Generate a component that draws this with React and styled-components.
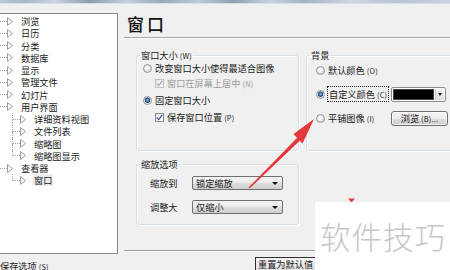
import React from 'react'
import styled, { createGlobalStyle } from 'styled-components'

const CJK = `"Noto Sans CJK SC", "Noto Sans", sans-serif`

const GlobalStyle = createGlobalStyle`
  html, body {
    margin: 0;
    padding: 0;
    background: #f0f0f0;
  }
  body {
    font-family: ${CJK};
  }
`

const Screen = styled.div`
  position: relative;
  width: 450px;
  height: 270px;
  overflow: hidden;
  background: #f0f0f0;
  font-family: ${CJK};
  font-size: 9.2px;
  color: #1a1a1a;
`

const TitleStrip = styled.div`
  height: 4px;
  background: linear-gradient(
    90deg,
    #b7c6d4 0%,
    #a9b8c6 6%,
    #c9d5e0 12%,
    #8d9cac 20%,
    #c3d0dc 28%,
    #9aa9b8 36%,
    #bccad7 44%,
    #8f9fb0 52%,
    #c6d3df 60%,
    #a4b3c1 68%,
    #cdd8e2 78%,
    #b6c4d1 88%,
    #c8d4df 100%
  );
  border-bottom: 1px solid #d8dfe6;
  box-sizing: border-box;
`

const Main = styled.div`
  display: flex;
  align-items: flex-start;
  padding-top: 9px;
  height: 240px;
`

const TreePanel = styled.div`
  box-sizing: border-box;
  width: 119px;
  height: 241px;
  margin-left: -1px;
  background: #fff;
  border: 1px solid #828790;
  padding-top: 1px;
  flex: none;
`

const TreeRow = styled.div`
  display: flex;
  align-items: center;
  height: 12.25px;
  white-space: nowrap;
  line-height: 12px;
`

const Indent = styled.div`
  width: ${({ $w }) => $w}px;
  height: 100%;
  flex: none;
`

const Elbow = styled.div`
  display: flex;
  flex-direction: column;
  width: ${({ $w }) => $w}px;
  height: 100%;
  flex: none;
`

const ElbowTop = styled.div`
  flex: 1;
  box-sizing: border-box;
  border-bottom: 1px dotted #a0a0a0;
  border-left: ${({ $line }) => ($line ? '1px dotted #a0a0a0' : 'none')};
`

const ElbowBottom = styled.div`
  flex: 1;
  box-sizing: border-box;
  border-left: ${({ $line }) => ($line ? '1px dotted #a0a0a0' : 'none')};
`

const Expander = styled.svg`
  flex: none;
  margin-right: 7px;
`

const TreeText = styled.span`
  padding: 0 1px;
  background: ${({ $selected }) => ($selected ? '#ececec' : 'transparent')};
`

const Pane = styled.div`
  box-sizing: border-box;
  flex: 1;
  margin-left: 6px;
  height: 238px;
  display: flex;
  flex-direction: column;
  border-bottom: 1px solid #a0a0a0;
  box-shadow: 0 1px 0 #fff;
  min-width: 0;
`

const Heading = styled.div`
  box-sizing: border-box;
  height: 25px;
  padding: 1px 0 0 3px;
  font-size: 17px;
  line-height: 20px;
  letter-spacing: 3px;
  font-weight: 500;
  color: #111;
  border-bottom: 1px solid #a5a5a5;
  box-shadow: 0 1px 0 #fff;
  flex: none;
`

const Content = styled.div`
  display: grid;
  grid-template-columns: 163px 160px;
  grid-template-rows: 101px 66px;
  column-gap: 7px;
  row-gap: 8px;
  padding: 12px 0 0 12px;
`

const Group = styled.fieldset`
  box-sizing: border-box;
  margin: 0;
  padding: 0;
  min-width: 0;
  border: 1px solid #d5dfe5;
  border-radius: 3px;
  box-shadow: inset 1px 1px 0 #fff, 1px 1px 0 #fff;
`

const Legend = styled.legend`
  margin-left: 3px;
  padding: 0 1px;
  font-size: 9.2px;
  line-height: 11px;
  color: #1a1a1a;
`

const Key = styled.span`
  font-size: 7.4px;
  margin-left: 2px;
  letter-spacing: 0.2px;
`

const Options = styled.div`
  display: flex;
  flex-direction: column;
  padding-left: ${({ $pl }) => $pl}px;
`

const Row = styled.div`
  display: flex;
  align-items: center;
  height: ${({ $h }) => $h || 14}px;
  margin-top: ${({ $mt }) => $mt || 0}px;
  padding-left: ${({ $indent }) => $indent || 0}px;
  white-space: nowrap;
  color: ${({ $disabled }) => ($disabled ? '#9c9c9c' : '#1a1a1a')};
`

const Radio = styled.span`
  box-sizing: border-box;
  flex: none;
  width: 9px;
  height: 9px;
  margin-right: 3px;
  border-radius: 50%;
  border: 1px solid #939393;
  background: ${({ $checked }) => ($checked
    ? 'radial-gradient(circle at 50% 45%, #a8cbeb 0, #4d80b3 1.2px, #1e4a78 2.4px, #dadada 2.9px, #f6f6f6 4px)'
    : 'radial-gradient(circle at 45% 40%, #ffffff 0, #f0f0f0 2px, #d9d9d9 4px)')};
`

const Check = styled.span`
  box-sizing: border-box;
  flex: none;
  display: flex;
  align-items: center;
  justify-content: center;
  width: 9px;
  height: 9px;
  margin-right: 3px;
  border: 1px solid ${({ $disabled }) => ($disabled ? '#c3c3c3' : '#8e8f8f')};
  background: linear-gradient(135deg, #e4e4e4, #fafafa);
`

const Label = styled.span`
  box-sizing: border-box;
  display: inline-block;
  width: ${({ $w }) => ($w ? `${$w}px` : 'auto')};
  flex: none;
`

const FocusText = styled.span`
  outline: 1px dotted #222;
  outline-offset: 0;
  padding: 0 1px;
`

const ColorPick = styled.div`
  box-sizing: border-box;
  display: flex;
  width: 55px;
  height: 15px;
  border: 1px solid #8c8c8c;
  border-radius: 2px;
  background: #fdfdfd;
  padding: 1px;
  flex: none;
`

const Swatch = styled.div`
  flex: 1;
  background: ${({ $color }) => $color};
  border: 1px solid #444;
`

const PickArrow = styled.div`
  width: 8px;
  display: flex;
  align-items: center;
  justify-content: center;
  border-left: 1px solid #c8c8c8;
  margin-left: 1px;
  background: linear-gradient(#f6f6f6, #dcdcdc);
  &::after {
    content: '';
    border-left: 2px solid transparent;
    border-right: 2px solid transparent;
    border-top: 3px solid #222;
  }
`

const Button = styled.div`
  box-sizing: border-box;
  width: ${({ $w }) => $w}px;
  height: 15px;
  display: flex;
  align-items: center;
  justify-content: center;
  border: 1px solid #707070;
  border-radius: 3px;
  background: linear-gradient(#f3f3f3 0%, #ebebeb 50%, #dddddd 51%, #cfcfcf 100%);
  box-shadow: inset 0 0 0 1px rgba(255, 255, 255, 0.7);
  white-space: nowrap;
  flex: none;
`

const ZoomRows = styled.div`
  display: grid;
  grid-template-columns: 28px 91px;
  column-gap: 14px;
  row-gap: 10px;
  padding: 6px 0 0 13px;
  align-items: center;
`

const ZoomLabel = styled.span`
  line-height: 14px;
  white-space: nowrap;
`

const Select = styled.div`
  box-sizing: border-box;
  height: 14px;
  display: flex;
  align-items: center;
  justify-content: space-between;
  padding: 0 4px 0 3px;
  border: 1px solid #707070;
  border-radius: 2px;
  background: linear-gradient(#f2f2f2 0%, #ebebeb 50%, #dddddd 51%, #cfcfcf 100%);
  white-space: nowrap;
  &::after {
    content: '';
    border-left: 3px solid transparent;
    border-right: 3px solid transparent;
    border-top: 3px solid #111;
  }
`

const Footer = styled.div`
  display: flex;
  align-items: flex-start;
  padding-top: 4px;
`

const FooterText = styled.div`
  width: 255px;
  padding-top: 4px;
  line-height: 11px;
  white-space: nowrap;
  flex: none;
`

const ResetButton = styled.div`
  box-sizing: border-box;
  height: 14px;
  padding: 0 2px;
  line-height: 12px;
  border: 1px solid #2e2e2e;
  border-right-color: #9a9a9a;
  background: linear-gradient(#f4f4f4, #e2e2e2);
  white-space: nowrap;
`

const ArrowLayer = styled.svg`
  position: absolute;
  left: 0;
  top: 0;
  pointer-events: none;
`

const Watermark = styled.div`
  position: absolute;
  left: 315px;
  top: 202px;
  width: 135px;
  height: 68px;
  background: #fff;
  display: flex;
  align-items: center;
  padding-left: 5px;
  box-sizing: border-box;
  font-size: 30.5px;
  font-weight: 300;
  color: #c6c6c6;
  letter-spacing: 1px;
  white-space: nowrap;
`

const treeItems = [
  { text: '浏览', level: 0 },
  { text: '日历', level: 0 },
  { text: '分类', level: 0 },
  { text: '数据库', level: 0 },
  { text: '显示', level: 0 },
  { text: '管理文件', level: 0 },
  { text: '幻灯片', level: 0 },
  { text: '用户界面', level: 0 },
  { text: '详细资料视图', level: 1 },
  { text: '文件列表', level: 1 },
  { text: '缩略图', level: 1 },
  { text: '缩略图显示', level: 1, last: true },
  { text: '查看器', level: 0 },
  { text: '窗口', level: 1, last: true, selected: true },
]

const Triangle = () => (
  <Expander width="6" height="9" viewBox="0 0 6 9">
    <polygon points="0.5,0.5 5.5,4.5 0.5,8.5" fill="#fff" stroke="#9c9c9c" strokeWidth="1" />
  </Expander>
)

const Tick = ({ disabled }) => (
  <svg width="7" height="7" viewBox="0 0 7 7">
    <path
      d="M0.8 3.6 L2.7 5.6 L6.3 0.9"
      fill="none"
      stroke={disabled ? '#a9a9a9' : '#3f5a92'}
      strokeWidth="1.3"
    />
  </svg>
)

const Tree = () => (
  <TreePanel>
    {treeItems.map((item) => (
      <TreeRow key={item.text}>
        {item.level === 1 && <Indent $w={12} />}
        <Elbow $w={item.level === 1 ? 8 : 7}>
          <ElbowTop $line={item.level === 1} />
          <ElbowBottom $line={item.level === 1 && !item.last} />
        </Elbow>
        <Triangle />
        <TreeText $selected={item.selected}>{item.text}</TreeText>
      </TreeRow>
    ))}
  </TreePanel>
)

export default function App() {
  return (
    <Screen>
      <GlobalStyle />
      <TitleStrip />
      <Main>
        <Tree />
        <Pane>
          <Heading>窗口</Heading>
          <Content>
            <Group>
              <Legend>窗口大小<Key>(W)</Key></Legend>
              <Options $pl={6}>
                <Row>
                  <Radio />
                  改变窗口大小使得最适合图像
                </Row>
                <Row $mt={1} $indent={12} $disabled>
                  <Check $disabled><Tick disabled /></Check>
                  窗口在屏幕上居中<Key>(N)</Key>
                </Row>
                <Row $mt={3}>
                  <Radio $checked />
                  固定窗口大小
                </Row>
                <Row $mt={3} $indent={12}>
                  <Check><Tick /></Check>
                  保存窗口位置<Key>(P)</Key>
                </Row>
              </Options>
            </Group>

            <Group>
              <Legend>背景</Legend>
              <Options $pl={9}>
                <Row $h={16} $mt={1}>
                  <Radio />
                  <Label>默认颜色<Key>(O)</Key></Label>
                </Row>
                <Row $h={16} $mt={8}>
                  <Radio $checked />
                  <Label $w={63}><FocusText>自定义颜色<Key>(C)</Key></FocusText></Label>
                  <ColorPick>
                    <Swatch $color="#000" />
                    <PickArrow />
                  </ColorPick>
                </Row>
                <Row $h={16} $mt={8}>
                  <Radio />
                  <Label $w={63}>平铺图像<Key>(I)</Key></Label>
                  <Button $w={57}>浏览<Key>(B)...</Key></Button>
                </Row>
              </Options>
            </Group>

            <Group>
              <Legend>缩放选项</Legend>
              <ZoomRows>
                <ZoomLabel>缩放到</ZoomLabel>
                <Select>锁定缩放</Select>
                <ZoomLabel>调整大</ZoomLabel>
                <Select>仅缩小</Select>
              </ZoomRows>
            </Group>
          </Content>
        </Pane>
      </Main>
      <Footer>
        <FooterText>保存选项<Key>(S)</Key></FooterText>
        <ResetButton>重置为默认值<Key>(R)</Key></ResetButton>
      </Footer>

      <ArrowLayer width="450" height="270" viewBox="0 0 450 270">
        <polygon points="248.6,187.6 249.6,188.6 300.2,140.2 297.4,137.6" fill="#e2383a" />
        <polygon points="314,119 293.5,134 302.5,143.5" fill="#e2383a" />
        <polygon points="348,198.5 355,198.5 351.5,202.5" fill="#e2383a" />
      </ArrowLayer>
      <Watermark>软件技巧</Watermark>
    </Screen>
  )
}
